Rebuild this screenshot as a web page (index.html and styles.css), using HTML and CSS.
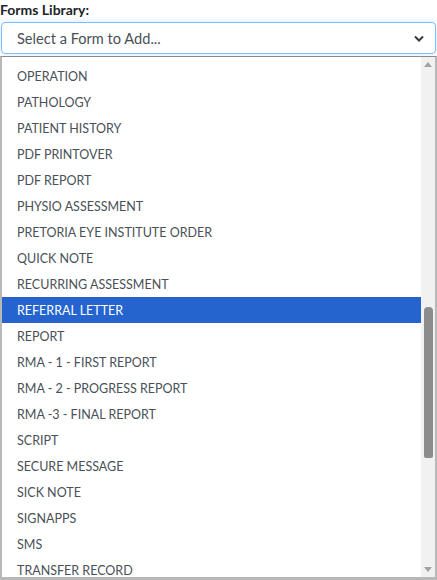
FILE: index.html
```html
<!DOCTYPE html>
<html>
<head>
<meta charset="utf-8">
<link rel="stylesheet" href="styles.css">
</head>
<body>
<div class="page">
  <label class="label">Forms Library:</label>
  <div class="select">
    <span class="select-text">Select a Form to Add...</span>
    <svg class="chev" width="10" height="7" viewBox="0 0 10 7"><path d="M1 1.5 L5 5.5 L9 1.5" fill="none" stroke="#343a40" stroke-width="2"/></svg>
  </div>
  <div class="dropdown">
    <ul class="list">
      <li>OPERATION</li>
      <li>PATHOLOGY</li>
      <li>PATIENT HISTORY</li>
      <li>PDF PRINTOVER</li>
      <li>PDF REPORT</li>
      <li>PHYSIO ASSESSMENT</li>
      <li>PRETORIA EYE INSTITUTE ORDER</li>
      <li>QUICK NOTE</li>
      <li>RECURRING ASSESSMENT</li>
      <li class="active">REFERRAL LETTER</li>
      <li>REPORT</li>
      <li>RMA - 1 - FIRST REPORT</li>
      <li>RMA - 2 - PROGRESS REPORT</li>
      <li>RMA -3 - FINAL REPORT</li>
      <li>SCRIPT</li>
      <li>SECURE MESSAGE</li>
      <li>SICK NOTE</li>
      <li>SIGNAPPS</li>
      <li>SMS</li>
      <li>TRANSFER RECORD</li>
    </ul>
    <div class="scrollbar">
      <div class="arrow up"></div>
      <div class="track"><div class="thumb"></div></div>
      <div class="arrow down"></div>
    </div>
  </div>
</div>
</body>
</html>
```
FILE: styles.css
```css
html, body {
  margin: 0;
  padding: 0;
  background: #fff;
}
.page {
  width: 437px;
  height: 580px;
  overflow: hidden;
  display: flex;
  flex-direction: column;
  font-family: Lato, "Liberation Sans", sans-serif;
}
.label {
  display: block;
  font-weight: bold;
  font-size: 14px;
  color: #212529;
  line-height: 17px;
  padding: 1px 0 0 0;
  height: 22px;
  box-sizing: border-box;
}
.select {
  margin: 0 1px 0 1px;
  height: 32px;
  box-sizing: border-box;
  border: 1px solid #80bdff;
  border-radius: 4px;
  box-shadow: 0 0 6px rgba(128, 189, 255, 0.35);
  display: flex;
  align-items: center;
  justify-content: space-between;
  padding: 0 11px 0 15px;
}
.select-text {
  font-size: 14.6px;
  color: #495057;
}
.chev {
  display: block;
}
.dropdown {
  margin-top: 2px;
  flex: 1;
  min-height: 0;
  display: flex;
  border: 2px solid #b8b8b8;
  border-bottom-width: 3px;
  border-top: 1px solid #8a8a8a;
  background: #fff;
  overflow: hidden;
}
.list {
  list-style: none;
  margin: 0;
  padding: 6px 0 0 0;
  flex: 1;
  min-width: 0;
  overflow: hidden;
}
.list li {
  height: 26px;
  line-height: 28px;
  padding-left: 15px;
  font-size: 12.5px;
  color: #495057;
  white-space: nowrap;
}
.list li.active {
  background: #2563cf;
  color: #fff;
}
.scrollbar {
  width: 14px;
  background: #f1f1f1;
  display: flex;
  flex-direction: column;
}
.arrow {
  height: 15px;
  display: flex;
  align-items: center;
  justify-content: center;
}
.arrow.up::before {
  content: "";
  border-left: 4px solid transparent;
  border-right: 4px solid transparent;
  border-bottom: 5px solid #a3a3a3;
}
.arrow.down::before {
  content: "";
  border-left: 4px solid transparent;
  border-right: 4px solid transparent;
  border-top: 5px solid #a3a3a3;
}
.track {
  flex: 1;
  display: flex;
  justify-content: center;
}
.thumb {
  margin-top: 235px;
  width: 9px;
  height: 151px;
  background: #8c8c8c;
  border-radius: 4px 4px 2px 2px;
}
```
